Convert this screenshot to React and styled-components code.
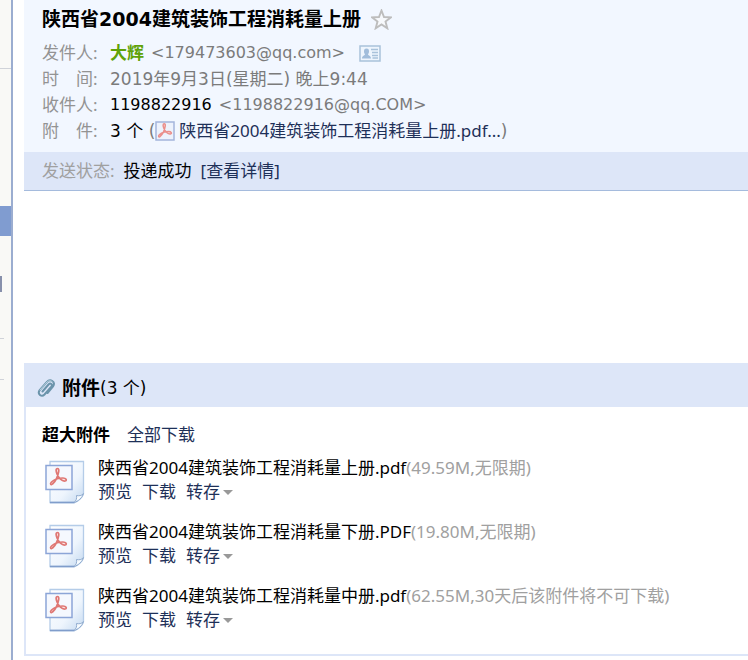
import React from 'react';
import styled, { createGlobalStyle } from 'styled-components';

const GlobalStyle = createGlobalStyle`
    * {
        box-sizing: border-box;
    }

    body {
        margin: 0;
        background: #fff;
        color: #000;
        font: 17px/24px "Noto Sans", "Noto Sans CJK SC", sans-serif;
    }
`;

const Page = styled.div`
    display: flex;
    min-height: 100vh;
    overflow: hidden;
`;

const Sidebar = styled.aside`
    flex: none;
    width: 13px;
    padding-top: 68px;
    background: #f9f9f6;
    border-right: 2px solid #9badd0;
`;

const Divider = styled.hr`
    width: ${({ $short }) => ($short ? '4px' : '100%')};
    height: 1px;
    margin: 0 0 ${({ $space }) => $space || 0}px;
    border: none;
    background: #d0d3d9;
`;

const Selected = styled.div`
    height: 30px;
    margin-bottom: 40px;
    background: #809cd0;
`;

const Marker = styled.div`
    width: 2px;
    height: 16px;
    margin-bottom: 46px;
    background: #8790ab;
`;

const Mail = styled.main`
    flex: 1;
    min-width: 0;
    padding-left: 11px;
    white-space: nowrap;
`;

const Header = styled.header`
    padding: 6px 18px 8px;
    background: #f2f7ff;
    line-height: 26px;
`;

const Subject = styled.h1`
    display: flex;
    align-items: center;
    gap: 10px;
    margin: 0 0 8px;
    font: bold 19px/26px "DejaVu Sans", "Noto Sans CJK SC", sans-serif;
`;

const IconButton = styled.button`
    display: flex;
    padding: 0;
    border: none;
    background: none;
    cursor: pointer;
`;

const Field = styled.div`
    display: flex;
    align-items: center;
    height: 26px;
`;

const Label = styled.span`
    flex: none;
    width: 68px;
    color: #939393;
`;

const Sender = styled.b`
    color: #5fa207;
`;

const Account = styled.span`
    font: 16px/26px "DejaVu Sans", sans-serif;
`;

const Address = styled(Account)`
    margin: 0 14px 0 7px;
    color: #7b7b7b;
`;

const Count = styled.span`
    font-family: "DejaVu Sans", "Noto Sans CJK SC", sans-serif;
`;

const Muted = styled(Count)`
    color: #7b7b7b;
`;

const Link = styled.a`
    color: #1e3058;
    text-decoration: none;

    &:hover {
        text-decoration: underline;
    }
`;

const FileLink = styled(Link)`
    display: flex;
    align-items: center;
    gap: 4px;
`;

const Status = styled.div`
    display: flex;
    gap: 9px;
    padding: 6px 18px;
    background: #dde6f8;
    border-bottom: 1px solid #a5bbdd;
    line-height: 26px;
`;

const Body = styled.div`
    min-height: 172px;
`;

const Attachments = styled.section`
    border-left: 2px solid #dde6f8;
    border-bottom: 2px solid #dde6f8;
`;

const AttachHead = styled.div`
    display: flex;
    align-items: center;
    height: 44px;
    padding: 5px 11px 0;
    background: #dde6f8;
`;

const AttachTitle = styled.h2`
    margin: 0 0 0 6px;
    font-size: 19px;
    line-height: 24px;
`;

const AttachBody = styled.div`
    padding: 16px 16px 22px;
`;

const Group = styled.div`
    display: flex;
    gap: 17px;
    margin-bottom: 9px;
`;

const FileList = styled.ul`
    display: flex;
    flex-direction: column;
    gap: 16px;
    margin: 0;
    padding: 0;
    list-style: none;
`;

const FileItem = styled.li`
    display: flex;
    align-items: flex-end;
    gap: 13px;
    padding-left: 3px;
`;

const Size = styled.span`
    color: #a0a0a0;
`;

const Actions = styled.div`
    display: flex;
    gap: 10px;
`;

const MenuButton = styled.button`
    display: flex;
    align-items: center;
    gap: 3px;
    padding: 0;
    border: none;
    background: none;
    color: #1e3058;
    font: inherit;
    cursor: pointer;
`;

const Caret = styled.i`
    border: 5px solid transparent;
    border-top-color: #999;
    border-bottom: none;
`;

// shared by both pdf icons
const swirl = 'M12.5 4.5c-2 0-1.5 3-.5 5.500 1.500 4 5 7.500 8 7 2.500-.5 1-3-2-3-4 0-9 1.500-11.500 4-2 2-.5 3.500 1 2 3-2.500 5.500-8.500 6.200-12.500.3-2-.2-3-1.200-3z';

function StarIcon() {
    return (
        <svg width="21" height="21" viewBox="0 0 21 21" fill="#f7f9fc" stroke="#bdbdbd" strokeWidth="1.9">
            <path d="M10.5 1.5L13 8l6.900.3-5.400 4.200 1.800 6.800-5.800-3.800-5.800 3.800 1.800-6.800L1.100 8.300 8 8z" />
        </svg>
    );
}

function ContactIcon() {
    return (
        <svg width="22" height="17" viewBox="0 0 22 17">
            <rect x="1" y="1" width="20" height="15" fill="#eef5fd" stroke="#a9c2da" strokeWidth="1.5" />
            <path d="M7.5 3.5c2 0 2.500 1.200 2.500 3 0 1.400-.6 2.100-1 2.700.1 1.300 3 1.300 3 4.300H3c0-3 2.900-3 3-4.300-.4-.6-1-1.300-1-2.700 0-1.800.5-3 2.500-3z" fill="#a1bddb" />
            <path d="M12 4.500h7M13 7.500h6M13 10.500h6M13.500 13h5.500" stroke="#a9c2da" strokeWidth="1.3" />
        </svg>
    );
}

function SmallPdfIcon() {
    return (
        <svg width="20" height="20" viewBox="0 0 20 20">
            <rect x="1" y="1" width="18" height="18" fill="#edf2fc" stroke="#a4b5dc" strokeWidth="1.5" />
            <path d={swirl} transform="translate(-1 -1) scale(.82)" fill="#f9dcdc" stroke="#ea8f8c" strokeWidth="1.8" />
        </svg>
    );
}

function ClipIcon() {
    return (
        <svg width="19" height="20" viewBox="0 0 19 20" fill="none" strokeLinecap="round">
            <path d="M5.5 13.5l6-7c2-2.300 4.500 0 2.800 2.200l-6.800 7.800c-3 3-7.500-.5-4.800-4.300l7-8c3.500-4 9.300-.5 6.300 4.300l-5.500 6.500" stroke="#6b94ab" strokeWidth="2" />
            <path d="M3 12l7-8c2-2 4.500-1.500 5.500 0" stroke="#b5d1df" strokeWidth="1" />
        </svg>
    );
}

function PdfIcon() {
    return (
        <svg width="40" height="44" viewBox="0 0 40 44">
            <defs>
                <linearGradient id="paper" x1="0" y1="0" x2="1" y2="1">
                    <stop offset="0" stopColor="#fff" />
                    <stop offset=".6" stopColor="#eef5fd" />
                    <stop offset="1" stopColor="#c4d9f0" />
                </linearGradient>
            </defs>
            <path d="M5 1.5h33.500v32c-1 4-5 8-9 9H5z" fill="url(#paper)" stroke="#b4cce8" strokeWidth="1.3" />
            <path d="M5 42.5h24.500" stroke="#809dcb" strokeWidth="1.6" />
            <path d="M38.5 33.5c-2 2.500-4.500 2.500-7 2 .5 3-.3 5.500-2.500 7 4-1 8.500-5 9.500-9z" fill="#f8fcff" stroke="#91accf" />
            <rect x="1" y="5.5" width="26" height="24" fill="#f5f8fe" stroke="#8ca5d7" strokeWidth="1.5" />
            <path d={swirl} transform="translate(0 4)" fill="#fbe6e6" stroke="#df7774" strokeWidth="1.7" />
        </svg>
    );
}

const files = [
    { name: '陕西省2004建筑装饰工程消耗量上册.pdf', size: '(49.59M,无限期)' },
    { name: '陕西省2004建筑装饰工程消耗量下册.PDF', size: '(19.80M,无限期)' },
    { name: '陕西省2004建筑装饰工程消耗量中册.pdf', size: '(62.55M,30天后该附件将不可下载)' },
];

function FileRow({ file }) {
    return (
        <FileItem>
            <PdfIcon />
            <div>
                <div>{file.name}<Size>{file.size}</Size></div>
                <Actions>
                    <Link href="#preview">预览</Link>
                    <Link href="#download">下载</Link>
                    <MenuButton type="button">转存<Caret /></MenuButton>
                </Actions>
            </div>
        </FileItem>
    );
}

export default function App() {
    return (
        <Page>
            <GlobalStyle />
            <Sidebar>
                <Divider $space={137} />
                <Selected />
                <Marker />
                <Divider $short $space={40} />
                <Divider $short />
            </Sidebar>
            <Mail>
                <Header>
                    <Subject>
                        陕西省2004建筑装饰工程消耗量上册
                        <IconButton type="button" aria-label="星标"><StarIcon /></IconButton>
                    </Subject>
                    <Field>
                        <Label>发件人:</Label>
                        <Sender>大辉</Sender>
                        <Address>&lt;179473603@qq.com&gt;</Address>
                        <IconButton type="button" aria-label="联系人"><ContactIcon /></IconButton>
                    </Field>
                    <Field>
                        <Label>时　间:</Label>
                        <Muted>2019年9月3日(星期二) 晚上9:44</Muted>
                    </Field>
                    <Field>
                        <Label>收件人:</Label>
                        <Account>1198822916</Account>
                        <Address>&lt;1198822916@qq.COM&gt;</Address>
                    </Field>
                    <Field>
                        <Label>附　件:</Label>
                        <Count>3 个&nbsp;</Count>
                        <Muted>(</Muted>
                        <FileLink href="#attachments">
                            <SmallPdfIcon />
                            陕西省2004建筑装饰工程消耗量上册.pdf...
                        </FileLink>
                        <Muted>)</Muted>
                    </Field>
                </Header>
                <Status>
                    <Size>发送状态:</Size>
                    <span>投递成功</span>
                    <Link href="#status">[查看详情]</Link>
                </Status>
                <Body />
                <Attachments id="attachments">
                    <AttachHead>
                        <ClipIcon />
                        <AttachTitle>附件</AttachTitle>
                        <Count>(3 个)</Count>
                    </AttachHead>
                    <AttachBody>
                        <Group>
                            <b>超大附件</b>
                            <Link href="#all">全部下载</Link>
                        </Group>
                        <FileList>
                            {files.map((file) => <FileRow key={file.name} file={file} />)}
                        </FileList>
                    </AttachBody>
                </Attachments>
            </Mail>
        </Page>
    );
}
